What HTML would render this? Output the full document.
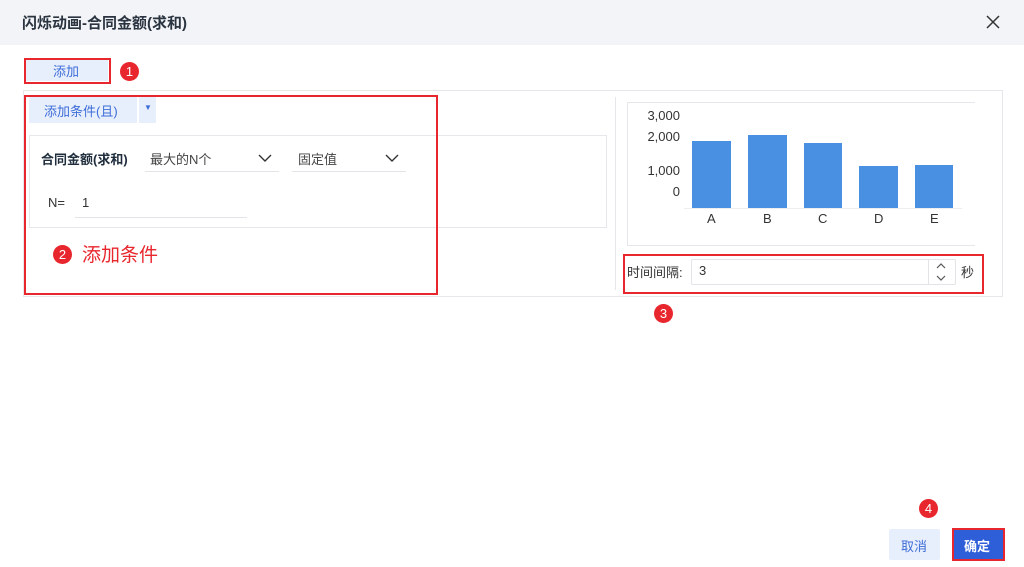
<!DOCTYPE html>
<html><head><meta charset="utf-8"><style>
*{margin:0;padding:0;box-sizing:border-box}
body{width:1024px;height:567px;background:#fff;position:relative;overflow:hidden;font-family:"Liberation Sans","Noto Sans CJK SC",sans-serif;color:#1f2d3d}
.a{position:absolute}
.badge{position:absolute;width:19px;height:19px;border-radius:50%;background:#e8262d;color:#fff;font-size:13px;text-align:center;line-height:19px}
.red{position:absolute;border:2px solid #e8262d}
.t{position:absolute;white-space:nowrap}
</style></head><body>
<div class="a" style="left:0;top:0;width:1024px;height:45px;background:#f2f4f7"></div>
<div class="t" style="left:22px;top:12px;font-size:15px;font-weight:bold;color:#2a3340">闪烁动画-合同金额(求和)</div>
<svg class="a" style="left:986px;top:15px" width="14" height="14"><path d="M1 1L13 13M13 1L1 13" stroke="#333" stroke-width="1.5"/></svg>

<div class="a" style="left:26px;top:60px;width:82px;height:21px;background:#e8effc"></div>
<div class="red" style="left:24px;top:58px;width:87px;height:26px"></div>
<div class="t" style="left:53px;top:61px;font-size:13px;color:#3d6dd8">添加</div>
<div class="badge" style="left:120px;top:62px">1</div>

<div class="a" style="left:23px;top:90px;width:980px;height:207px;border:1px solid #e5e7eb"></div>
<div class="a" style="left:29px;top:97px;width:108px;height:26px;background:#e8effc"></div>
<div class="t" style="left:44px;top:101px;font-size:13px;color:#3d6dd8">添加条件(且)</div>
<div class="a" style="left:139px;top:97px;width:17px;height:26px;background:#e8effc"></div>
<div class="t" style="left:144px;top:103px;font-size:8px;color:#3d6dd8">▼</div>
<div class="a" style="left:29px;top:135px;width:578px;height:93px;border:1px solid #e5e7eb"></div>
<div class="t" style="left:41px;top:149px;font-size:13px;font-weight:bold">合同金额(求和)</div>
<div class="t" style="left:150px;top:149px;font-size:13px;color:#444">最大的N个</div>
<div class="a" style="left:145px;top:171px;width:134px;height:1px;background:#e2e4e8"></div>
<svg class="a" style="left:258px;top:154px" width="14" height="9"><path d="M1 1L7 7L13 1" stroke="#333" stroke-width="1.4" fill="none"/></svg>
<div class="t" style="left:298px;top:149px;font-size:13px;color:#444">固定值</div>
<div class="a" style="left:292px;top:171px;width:114px;height:1px;background:#e2e4e8"></div>
<svg class="a" style="left:385px;top:154px" width="14" height="9"><path d="M1 1L7 7L13 1" stroke="#333" stroke-width="1.4" fill="none"/></svg>
<div class="t" style="left:48px;top:195px;font-size:13px;color:#333">N=</div>
<div class="t" style="left:82px;top:195px;font-size:13px;color:#333">1</div>
<div class="a" style="left:75px;top:217px;width:172px;height:1px;background:#e2e4e8"></div>
<div class="badge" style="left:53px;top:245px">2</div>
<div class="t" style="left:82px;top:240px;font-size:19px;color:#e8262d">添加条件</div>
<div class="red" style="left:24px;top:95px;width:414px;height:200px"></div>

<div class="a" style="left:615px;top:97px;width:1px;height:193px;background:#e5e7eb"></div>
<div class="a" style="left:627px;top:102px;width:348px;height:144px;border:1px solid #e5e7eb;border-right:none"></div>
<div class="t" style="left:640px;top:108px;width:40px;text-align:right;font-size:13px;color:#333">3,000</div>
<div class="t" style="left:640px;top:129px;width:40px;text-align:right;font-size:13px;color:#333">2,000</div>
<div class="t" style="left:640px;top:163px;width:40px;text-align:right;font-size:13px;color:#333">1,000</div>
<div class="t" style="left:640px;top:184px;width:40px;text-align:right;font-size:13px;color:#333">0</div>
<div class="a" style="left:684px;top:208px;width:278px;height:1px;background:#eee"></div>
<div class="a" style="left:692px;top:141px;width:39px;height:67px;background:#4a90e2"></div>
<div class="a" style="left:748px;top:135px;width:39px;height:73px;background:#4a90e2"></div>
<div class="a" style="left:804px;top:143px;width:38px;height:65px;background:#4a90e2"></div>
<div class="a" style="left:859px;top:166px;width:39px;height:42px;background:#4a90e2"></div>
<div class="a" style="left:915px;top:165px;width:38px;height:43px;background:#4a90e2"></div>
<div class="t" style="left:707px;top:211px;font-size:13px;color:#333">A</div>
<div class="t" style="left:763px;top:211px;font-size:13px;color:#333">B</div>
<div class="t" style="left:818px;top:211px;font-size:13px;color:#333">C</div>
<div class="t" style="left:874px;top:211px;font-size:13px;color:#333">D</div>
<div class="t" style="left:930px;top:211px;font-size:13px;color:#333">E</div>

<div class="t" style="left:627px;top:262px;font-size:13px;color:#333">时间间隔:</div>
<div class="a" style="left:691px;top:259px;width:265px;height:26px;border:1px solid #e2e4e8;border-radius:2px"></div>
<div class="t" style="left:699px;top:263px;font-size:13px;color:#333">3</div>
<div class="a" style="left:928px;top:260px;width:1px;height:24px;background:#e2e4e8"></div>
<svg class="a" style="left:935px;top:262px" width="12" height="20"><path d="M2 6L6 2L10 6M2 14L6 18L10 14" stroke="#555" stroke-width="1.2" fill="none"/></svg>
<div class="t" style="left:961px;top:262px;font-size:13px;color:#333">秒</div>
<div class="red" style="left:623px;top:254px;width:361px;height:40px"></div>
<div class="badge" style="left:654px;top:304px">3</div>

<div class="badge" style="left:919px;top:499px">4</div>
<div class="a" style="left:889px;top:529px;width:51px;height:31px;background:#e8effc;border-radius:2px"></div>
<div class="t" style="left:901px;top:536px;font-size:13px;color:#3d6dd8">取消</div>
<div class="a" style="left:952px;top:528px;width:53px;height:33px;background:#2f5fd8;border:2px solid #e8262d"></div>
<div class="t" style="left:964px;top:536px;font-size:13px;color:#fff;font-weight:bold">确定</div>
</body></html>
